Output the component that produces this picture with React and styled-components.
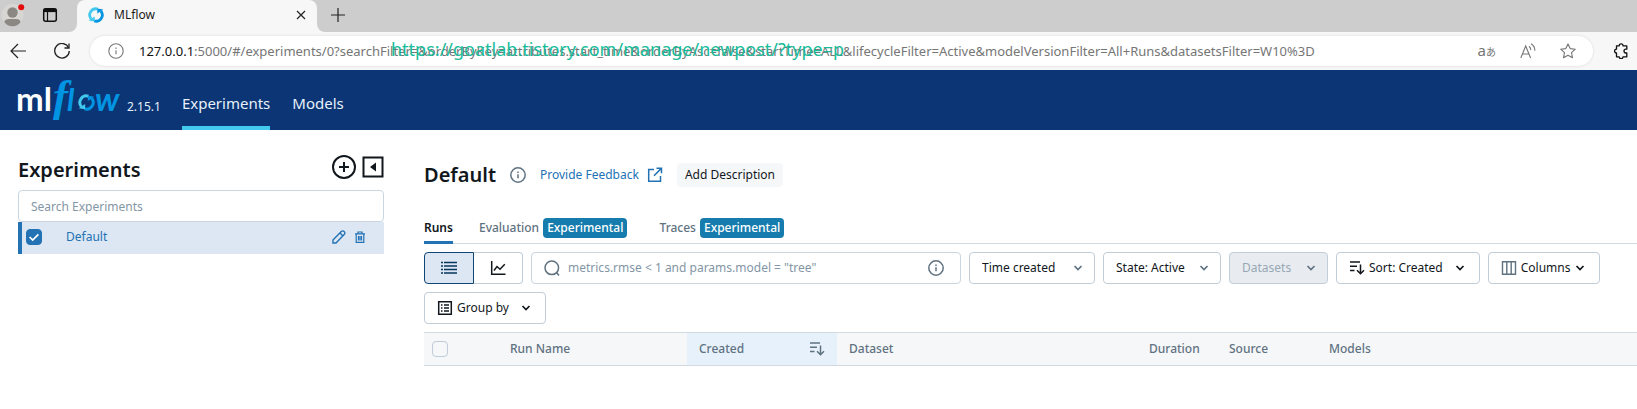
import React, { useState } from 'react';
import styled, { createGlobalStyle } from 'styled-components';

const GlobalStyle = createGlobalStyle`
  * {
    box-sizing: border-box;
  }

  body {
    margin: 0;
    background: #fff;
    color: #11171c;
    font-family: 'Noto Sans', sans-serif;
    font-size: 12px;
    line-height: 20px;
  }

  button, input, select {
    font: inherit;
    color: inherit;
  }

  svg {
    display: block;
    flex: none;
  }
`;

/* ---------- icons ---------- */

const Icon = ({ size = 16, box = 16, children, ...rest }) => (
  <svg
    width={size}
    height={size}
    viewBox={`0 0 ${box} ${box}`}
    fill="none"
    stroke="currentColor"
    strokeWidth="1.5"
    aria-hidden="true"
    {...rest}
  >
    {children}
  </svg>
);

const ProfileIcon = () => (
  <Icon size={24} box={24} stroke="none">
    <circle cx="11.500" cy="12" r="11" fill="#d8d6d3" />
    <circle cx="11.500" cy="9.500" r="5.200" fill="#8b8783" />
    <path d="M3.500 19.200c0-2.700 2.500-3.200 8-3.200s8 .5 8 3.200C17.500 22 15 23.300 11.500 23.300s-6-1.300-8-4.100z" fill="#8b8783" />
    <circle cx="20.200" cy="4.300" r="3" fill="#e30b0b" />
  </Icon>
);

const WorkspaceIcon = () => (
  <Icon color="#111">
    <rect x="1.700" y="1.700" width="12.600" height="12.600" rx="2" />
    <path d="M1.700 3.400h12.600" strokeWidth="3.400" />
    <path d="M5.500 4v10" strokeWidth="1.200" />
  </Icon>
);

const SyncRing = ({ size = 16, ...rest }) => (
  <Icon size={size} strokeWidth="2.800" {...rest}>
    <path d="M3.200 12A6.200 6.200 0 0 1 9.800 2.100" stroke="#43c9ed" />
    <path d="M12.800 4A6.200 6.200 0 0 1 6.200 13.900" stroke="#0194e2" />
    <path d="M.6 13.400L6.800 9.400l-.2 5z" fill="#43c9ed" stroke="none" />
    <path d="M15.400 2.600L9.200 6.600l.2-5z" fill="#0194e2" stroke="none" />
  </Icon>
);

const CloseIcon = () => (
  <Icon size={10} box={10} color="#222" strokeWidth="1.200">
    <path d="M1 1l8 8M9 1L1 9" />
  </Icon>
);

const PlusIcon = () => (
  <Icon size={14} box={14} color="#222" strokeWidth="1.200">
    <path d="M7 0v14M0 7h14" />
  </Icon>
);

const BackIcon = () => (
  <Icon color="#222" strokeWidth="1.200">
    <path d="M16 8H1M8 1L1 8l7 7" />
  </Icon>
);

const ReloadIcon = () => (
  <Icon color="#222" strokeWidth="1.300">
    <path d="M14.600 4.600A7.300 7.300 0 1 0 15.300 8" />
    <path d="M15 .5v4.500h-4.500" />
  </Icon>
);

const InfoIcon = ({ thin, ...rest }) => (
  <Icon strokeWidth={thin ? 1.1 : 1.5} {...rest}>
    <circle cx="8" cy="8" r="7.200" />
    <path d="M8 7.200v4M8 4.500v1.400" />
  </Icon>
);

const ReadAloudIcon = () => (
  <Icon strokeWidth="1.100">
    <path d="M.8 15L5.700 3l4.900 12M2.600 11h6.200M9 3.200c1.200.9 1.800 2.200 1.800 3.800M11 .8c2.500 1.500 3.900 3.800 3.900 7" />
  </Icon>
);

const StarIcon = () => (
  <Icon strokeWidth="1.100" strokeLinejoin="round">
    <path d="M8 .9l2.200 4.700 5.100.6-3.800 3.500 1 5.100L8 12.300l-4.500 2.500 1-5.100L.7 6.200l5.100-.6z" />
  </Icon>
);

const PuzzleIcon = () => (
  <Icon color="#111" strokeWidth="1.300" strokeLinejoin="round">
    <path d="M4 2.800h2.200a1.900 1.900 0 0 1 3.800 0h3.800v3.400h-.9a1.900 1.900 0 0 0 0 3.800h.9v3.800H10a1.900 1.900 0 0 1-3.800 0H3.500V10a1.900 1.900 0 0 1 0-3.800V2.800z" />
  </Icon>
);

const PlusCircleIcon = () => (
  <Icon size={24} box={24} strokeWidth="2">
    <circle cx="12" cy="12" r="11" />
    <path d="M12 7v10M7 12h10" />
  </Icon>
);

const CollapseIcon = () => (
  <Icon size={22} box={22} strokeWidth="2">
    <rect x="1.500" y="1.500" width="19" height="19" />
    <path d="M14 6.500v9L8 11z" fill="currentColor" stroke="none" />
  </Icon>
);

const PencilIcon = () => (
  <Icon size={14} box={14} strokeWidth="1.400">
    <path d="M1 10L9.300 1.600c.9-.9 2.100-.8 2.900 0 .9.8.9 2 0 2.900L4 13H1zM8 3l3 3" />
  </Icon>
);

const TrashIcon = () => (
  <Icon size={12} box={12} strokeWidth="1.200">
    <path d="M1 2.800h10M4 2.600V1h4v1.600M2.200 3v8.300h7.600V3M4.500 5v4.500M6 5v4.500M7.500 5v4.500" />
  </Icon>
);

const NewWindowIcon = () => (
  <Icon>
    <path d="M7 2.500H1.700v11.800h11.800V9M9.500 1.200h5v5M14.300 1.400L7 8.700" />
  </Icon>
);

const ListIcon = () => (
  <Icon>
    <path d="M0 2.500h2M0 6h2M0 9.500h2M0 13h2M3 2.500H16M3 6H16M3 9.500H16M3 13H16" />
  </Icon>
);

const ChartIcon = () => (
  <Icon>
    <path d="M1.700 1v13.200H15.500M4 10.500l3-4 3 2.700 4.800-5" />
  </Icon>
);

const SearchIcon = () => (
  <Icon>
    <circle cx="7.800" cy="7.800" r="6.800" />
    <path d="M12.500 12.500l2.500 3" />
  </Icon>
);

const ChevronIcon = () => (
  <Icon size={10} box={10} strokeWidth="1.700">
    <path d="M1.500 3L5 6.500 8.500 3" />
  </Icon>
);

const SortIcon = () => (
  <Icon>
    <path d="M1 2h10M1 6.200h7M1 10.400h4.500M11.500 4.500v9M8 10.300l3.500 3.500 3.500-3.500" />
  </Icon>
);

const ColumnsIcon = () => (
  <Icon strokeWidth="1.400" color="#5f7281">
    <path d="M1.500 1.700h13v12.600h-13zM5.800 2v12M10.200 2v12" />
  </Icon>
);

const GroupIcon = () => (
  <Icon>
    <path d="M1.700 1.700h12.600v12.600H1.700zM4 5h1.500M4 8h1.500M4 11h1.500M7 5h5M7 8h5M7 11h5" />
  </Icon>
);

/* ---------- browser frame ---------- */

const TabStrip = styled.div`
  display: flex;
  height: 32px;
  background: linear-gradient(#cdcdcd 50%, #f7f7f7 50%);
`;

const StripStart = styled.div`
  display: flex;
  gap: 17px;
  align-items: center;
  width: 77px;
  padding: 0 0 2px 1px;
  background: #cdcdcd;
  border-bottom-right-radius: 8px;
`;

const StripEnd = styled.div`
  flex: 1;
  display: flex;
  align-items: center;
  padding: 0 14px 2px;
  background: #cdcdcd;
  border-bottom-left-radius: 8px;
`;

const BrowserTab = styled.div`
  display: flex;
  align-items: center;
  gap: 10px;
  width: 240px;
  padding: 0 11px 2px;
  background: #f7f7f7;
  border-radius: 8px 8px 0 0;
  color: #1b1b1b;
`;

const TabTitle = styled.span`
  flex: 1;
`;

const IconButton = styled.button`
  display: flex;
  padding: 0;
  border: 0;
  background: none;
  cursor: pointer;
`;

const BrowserBar = styled.div`
  display: flex;
  align-items: center;
  gap: 20px;
  height: 38px;
  padding: 0 8px 0 10px;
  background: #f7f7f7;
`;

const NavButtons = styled.div`
  display: flex;
  gap: 28px;
`;

const AddressBar = styled.div`
  position: relative;
  flex: 1;
  display: flex;
  align-items: center;
  height: 30px;
  padding: 0 17px 0 18px;
  border-radius: 15px;
  background: #fff;
  box-shadow: 0 0 3px rgba(0, 0, 0, 0.12);
  color: #767676;
  font-size: 13px;
`;

const Host = styled.label`
  margin-left: 15px;
  color: #111;
`;

const UrlInput = styled.input`
  flex: 1;
  min-width: 0;
  padding: 0;
  border: 0;
  outline: 0;
  background: none;
`;

const AddressActions = styled.div`
  display: flex;
  align-items: center;
  gap: 24px;
`;

const Translate = styled.span`
  font-family: 'Noto Sans', 'Noto Sans CJK JP', sans-serif;
  font-size: 15px;

  small {
    font-size: 10px;
  }
`;

const Watermark = styled.span`
  position: absolute;
  left: 301px;
  top: 0;
  color: #1abc9c;
  font-size: 18px;
  line-height: 26px;
  white-space: nowrap;
`;

/* ---------- mlflow header ---------- */

const Header = styled.header`
  display: flex;
  height: 60px;
  padding-left: 16px;
  background: #0b3574;
  color: #e7f1fb;
`;

const Version = styled.span`
  padding: 27px 21px 0 4px;
`;

const Nav = styled.nav`
  display: flex;
  gap: 22px;
`;

const NavLink = styled.a`
  padding-top: 23px;
  border-bottom: 4px solid ${({ $active }) => ($active ? '#43c9ed' : 'transparent')};
  color: #e7f1fb;
  font-size: 15px;
  text-decoration: none;
`;

const Logo = () => (
  <svg width="107" height="60" viewBox="0 0 107 60" role="img" aria-label="mlflow">
    <g fontFamily="Lato, sans-serif" fontWeight="700">
      <text x="0" y="41" fill="#fff" fontSize="33">ml</text>
      <g fill="#0194e2" fontStyle="italic">
        <text x="37" y="41" fontFamily="'Liberation Serif', serif" fontSize="45">f</text>
        <text x="51" y="41" fontSize="31">l</text>
        <text x="79" y="41" fontSize="33">w</text>
      </g>
    </g>
    <SyncRing size={17} x="62" y="24" />
  </svg>
);

/* ---------- sidebar ---------- */

const Page = styled.div`
  display: flex;
  gap: 40px;
  padding-left: 18px;
`;

const Sidebar = styled.aside`
  flex: none;
  width: 366px;
  padding-top: 24px;
`;

const Row = styled.div`
  display: flex;
  align-items: center;
  gap: ${({ $gap }) => $gap || 8}px;
`;

const SidebarHead = styled(Row)`
  height: 26px;
  margin-bottom: 10px;
`;

const Heading = styled.h1`
  margin: 0;
  color: #11171c;
  font-size: 20px;
  line-height: 28px;
  font-weight: 600;
`;

const SidebarTitle = styled(Heading)`
  flex: 1;
  padding-top: 5px;
`;

const SidebarSearch = styled.input`
  display: block;
  width: 100%;
  height: 32px;
  padding: 0 12px;
  border: 1px solid #c9d5df;
  border-radius: 4px;

  &::placeholder {
    color: #8396a5;
  }
`;

const ExperimentRow = styled.div`
  display: flex;
  align-items: center;
  height: 32px;
  padding: 0 18px 2px 4px;
  border-left: 4px solid #2272b4;
  background: #dce7f3;
  color: #2272b4;
`;

const Checkbox = styled.input`
  appearance: none;
  flex: none;
  display: block;
  width: 16px;
  height: 16px;
  margin: 0;
  border: 1px solid #c0cdd8;
  border-radius: 4px;
  background: transparent;

  &:checked {
    border-color: #2272b4;
    background: #2272b4 url("data:image/svg+xml,%3Csvg xmlns='http://www.w3.org/2000/svg' viewBox='0 0 16 16' fill='none' stroke='white' stroke-width='2'%3E%3Cpath d='M3 8l3.500 3.500L13 5'/%3E%3C/svg%3E") center / 14px no-repeat;
  }
`;

const ExperimentLink = styled.a`
  flex: 1;
  margin-left: 24px;
  color: #2272b4;
  text-decoration: none;
`;

/* ---------- main ---------- */

const Main = styled.main`
  flex: 1;
  min-width: 0;
  padding-top: 28px;
`;

const TitleRow = styled(Row)`
  height: 34px;
  color: #5f7281;
`;

const FeedbackLink = styled.a`
  display: flex;
  align-items: center;
  gap: 8px;
  color: #2272b4;
  text-decoration: none;
`;

const DescriptionButton = styled.button`
  height: 24px;
  padding: 0 8px;
  border: 0;
  border-radius: 4px;
  background: #f6f7f9;
  color: #11171c;
`;

const Tabs = styled.div`
  display: flex;
  gap: 26px;
  height: 32px;
  margin-top: 20px;
  border-bottom: 1px solid #d1d9e1;
`;

const Tab = styled.button`
  display: flex;
  align-items: center;
  gap: 4px;
  margin-bottom: -1px;
  padding: 2px 0 0;
  border: 0;
  border-bottom: 3px solid ${({ $active }) => ($active ? '#2272b4' : 'transparent')};
  background: none;
  color: ${({ $active }) => ($active ? '#11171c' : '#5f7281')};
  font-weight: ${({ $active }) => ($active ? 600 : 500)};
  cursor: pointer;
`;

const Badge = styled.span`
  margin-right: 6px;
  padding: 0 4px;
  border-radius: 4px;
  background: #157cad;
  color: #fff;
`;

const Toolbar = styled.div`
  display: flex;
  flex-wrap: wrap;
  gap: 8px;
  margin: 8px 0;
`;

const Segmented = styled.div`
  display: flex;
`;

const Segment = styled.button`
  display: grid;
  place-items: center;
  width: ${({ $active }) => ($active ? 50 : 49)}px;
  height: 32px;
  padding: 0;
  border: 1px solid ${({ $active }) => ($active ? '#0e4776' : '#c0cdd8')};
  border-radius: ${({ $active }) => ($active ? '4px 0 0 4px' : '0 4px 4px 0')};
  border-left-width: ${({ $active }) => ($active ? 1 : 0)}px;
  background: ${({ $active }) => ($active ? '#dce7f3' : '#fff')};
  color: ${({ $active }) => ($active ? '#04355d' : '#11171c')};
`;

const SearchBox = styled.label`
  display: flex;
  align-items: center;
  gap: 8px;
  width: 430px;
  height: 32px;
  padding: 0 16px 0 12px;
  border: 1px solid #c9d5df;
  border-radius: 4px;
  color: #5f7281;

  input {
    flex: 1;
    min-width: 0;
    padding: 0;
    border: 0;
    outline: 0;
    background: none;
  }

  input::placeholder {
    color: #8396a5;
  }
`;

const ToolButton = styled.button`
  display: flex;
  align-items: center;
  gap: 4px;
  height: 32px;
  padding: 0 14px 0 12px;
  border: 1px solid #c0cdd8;
  border-radius: 4px;
  background: #fff;
`;

const ToolLabel = styled.span`
  margin-right: ${({ $space }) => $space || 0}px;
`;

const SelectBox = styled.div`
  display: grid;
  grid-template-columns: 1fr 10px;
  align-items: center;
  width: ${({ $width }) => $width}px;
  height: 32px;
  padding-right: 11px;
  border: 1px solid #c0cdd8;
  border-radius: 4px;
  background: ${({ $off }) => ($off ? '#e8ecf0' : '#fff')};
  color: #5f7281;

  select {
    grid-area: 1 / 1 / 2 / 3;
    appearance: none;
    height: 30px;
    padding: 0 0 0 12px;
    border: 0;
    background: none;
    color: ${({ $off }) => ($off ? '#98a7b5' : '#11171c')};
    opacity: 1;
  }

  svg {
    grid-area: 1 / 2;
    pointer-events: none;
  }
`;

const RunsTable = styled.table`
  width: 100%;
  table-layout: fixed;
  border-collapse: separate;
  border-spacing: 0;
`;

const Th = styled.th`
  width: ${({ $width }) => ($width ? `${$width}px` : 'auto')};
  height: 34px;
  padding: 0 ${({ $check }) => ($check ? 8 : 12)}px;
  border: solid #d1d9e1;
  border-width: 1px 0;
  background: ${({ $sorted }) => ($sorted ? '#e7f1fb' : '#f6f7f9')};
  color: #5f7281;
  font-weight: 500;
  text-align: left;
`;

const SortedHead = styled.div`
  display: flex;
  align-items: center;
  justify-content: space-between;
`;

const SelectFilter = ({ label, width, off }) => (
  <SelectBox $width={width} $off={off}>
    <select aria-label={label} disabled={off}>
      <option>{label}</option>
    </select>
    <ChevronIcon />
  </SelectBox>
);

const columns = [
  { name: 'Run Name', width: 189 },
  { name: 'Created', width: 150, sorted: true },
  { name: 'Dataset', width: 300 },
  { name: 'Duration', width: 80 },
  { name: 'Source', width: 100 },
  { name: 'Models' },
];

const tabs = [
  { name: 'Runs' },
  { name: 'Evaluation', experimental: true },
  { name: 'Traces', experimental: true },
];

const Browser = () => {
  const [url, setUrl] = useState(
    ':5000/#/experiments/0?searchFilter=&orderByKey=attributes.start_time&orderByAsc=false&startTime=ALL&lifecycleFilter=Active&modelVersionFilter=All+Runs&datasetsFilter=W10%3D'
  );

  return (
    <div>
      <TabStrip>
        <StripStart>
          <IconButton aria-label="Profile"><ProfileIcon /></IconButton>
          <IconButton aria-label="Workspaces"><WorkspaceIcon /></IconButton>
        </StripStart>
        <BrowserTab>
          <SyncRing />
          <TabTitle>MLflow</TabTitle>
          <IconButton aria-label="Close tab"><CloseIcon /></IconButton>
        </BrowserTab>
        <StripEnd>
          <IconButton aria-label="New tab"><PlusIcon /></IconButton>
        </StripEnd>
      </TabStrip>
      <BrowserBar>
        <NavButtons>
          <IconButton aria-label="Back"><BackIcon /></IconButton>
          <IconButton aria-label="Reload"><ReloadIcon /></IconButton>
        </NavButtons>
        <AddressBar>
          <InfoIcon thin />
          <Host htmlFor="url">127.0.0.1</Host>
          <UrlInput id="url" value={url} onChange={(e) => setUrl(e.target.value)} />
          <AddressActions>
            <Translate>a<small>あ</small></Translate>
            <IconButton aria-label="Read aloud"><ReadAloudIcon /></IconButton>
            <IconButton aria-label="Add to favorites"><StarIcon /></IconButton>
          </AddressActions>
          <Watermark>https://goatlab.tistory.com/manage/newpost/?type=p</Watermark>
        </AddressBar>
        <IconButton aria-label="Extensions"><PuzzleIcon /></IconButton>
      </BrowserBar>
    </div>
  );
};

const Experiments = () => {
  const [checked, setChecked] = useState(true);

  return (
    <Sidebar>
      <SidebarHead $gap={6}>
        <SidebarTitle as="h2">Experiments</SidebarTitle>
        <IconButton aria-label="New experiment"><PlusCircleIcon /></IconButton>
        <IconButton aria-label="Collapse sidebar"><CollapseIcon /></IconButton>
      </SidebarHead>
      <SidebarSearch placeholder="Search Experiments" aria-label="Search Experiments" />
      <ExperimentRow>
        <Checkbox
          type="checkbox"
          aria-label="Select Default"
          checked={checked}
          onChange={() => setChecked(!checked)}
        />
        <ExperimentLink href="#/experiments/0">Default</ExperimentLink>
        <Row>
          <IconButton aria-label="Rename"><PencilIcon /></IconButton>
          <IconButton aria-label="Delete"><TrashIcon /></IconButton>
        </Row>
      </ExperimentRow>
    </Sidebar>
  );
};

const Runs = () => {
  const [tab, setTab] = useState('Runs');

  return (
    <Main>
      <TitleRow $gap={14}>
        <Heading>Default</Heading>
        <InfoIcon />
        <FeedbackLink href="#feedback">Provide Feedback <NewWindowIcon /></FeedbackLink>
        <DescriptionButton>Add Description</DescriptionButton>
      </TitleRow>
      <Tabs role="tablist">
        {tabs.map(({ name, experimental }) => (
          <Tab
            key={name}
            role="tab"
            aria-selected={tab === name}
            $active={tab === name}
            onClick={() => setTab(name)}
          >
            {name}
            {experimental && <Badge>Experimental</Badge>}
          </Tab>
        ))}
      </Tabs>
      <Toolbar>
        <Segmented>
          <Segment $active aria-label="Table view"><ListIcon /></Segment>
          <Segment aria-label="Chart view"><ChartIcon /></Segment>
        </Segmented>
        <SearchBox>
          <SearchIcon />
          <input placeholder={'metrics.rmse < 1 and params.model = "tree"'} aria-label="Search runs" />
          <InfoIcon />
        </SearchBox>
        <SelectFilter label="Time created" width={126} />
        <SelectFilter label="State: Active" width={118} />
        <SelectFilter label="Datasets" width={99} off />
        <ToolButton>
          <SortIcon />
          <ToolLabel $space={8}>Sort: Created</ToolLabel>
          <ChevronIcon />
        </ToolButton>
        <ToolButton>
          <ColumnsIcon />
          <ToolLabel>Columns</ToolLabel>
          <ChevronIcon />
        </ToolButton>
        <ToolButton>
          <GroupIcon />
          <ToolLabel $space={8}>Group by</ToolLabel>
          <ChevronIcon />
        </ToolButton>
      </Toolbar>
      <RunsTable>
        <thead>
          <tr>
            <Th $width={74} $check>
              <Checkbox type="checkbox" aria-label="Select all runs" />
            </Th>
            {columns.map(({ name, width, sorted }) => (
              <Th key={name} $width={width} $sorted={sorted}>
                {sorted ? <SortedHead>{name}<SortIcon /></SortedHead> : name}
              </Th>
            ))}
          </tr>
        </thead>
      </RunsTable>
    </Main>
  );
};

const App = () => (
  <>
    <GlobalStyle />
    <Browser />
    <Header>
      <Logo />
      <Version>2.15.1</Version>
      <Nav>
        <NavLink href="#/experiments" $active>Experiments</NavLink>
        <NavLink href="#/models">Models</NavLink>
      </Nav>
    </Header>
    <Page>
      <Experiments />
      <Runs />
    </Page>
  </>
);

export default App;
